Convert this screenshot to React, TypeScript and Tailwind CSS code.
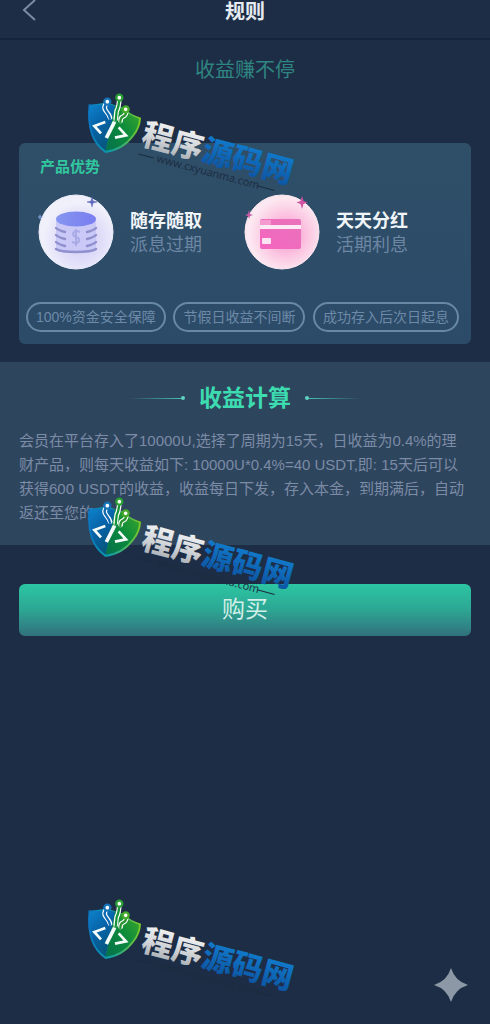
// App.tsx
//
// 规则页 — 产品优势卡片 + 收益计算说明 + 购买按钮,水印浮在内容之上。

import type { ReactNode } from "react";

type Feature = {
  title: string;
  subtitle: string;
  icon: ReactNode;
};

const FEATURES: Feature[] = [
  { title: "随存随取", subtitle: "派息过期", icon: <CoinsIcon /> },
  { title: "天天分红", subtitle: "活期利息", icon: <CardIcon /> },
];

const TAGS = ["100%资金安全保障", "节假日收益不间断", "成功存入后次日起息"];

function CoinsIcon() {
  return (
    <svg viewBox="0 0 76 76" className="size-[76px] shrink-0" aria-hidden="true">
      <defs>
        <radialGradient id="coins-bg" cx="0.56" cy="0.6">
          <stop offset="0" stopColor="#cfcbf8" />
          <stop offset="0.6" stopColor="#e0def9" />
          <stop offset="1" stopColor="#f0f0fb" />
        </radialGradient>
        <linearGradient id="coins-top" x1="0" x2="1">
          <stop offset="0" stopColor="#8595f0" />
          <stop offset="1" stopColor="#7a7df0" />
        </linearGradient>
      </defs>
      <circle cx="38" cy="38" r="37" fill="url(#coins-bg)" stroke="#eeeffa" />
      <path d="M18 26v29c0 5 40 5 40 0V26z" fill="#c9c8f6" />
      <g fill="none" stroke="#8f90cd" strokeWidth="2.4" strokeLinecap="round">
        <path d="M18 34c2 2 5 3 9 4M58 34c-2 2-5 3-9 4" />
        <path d="M18 41c2 2 5 3 9 4M58 41c-2 2-5 3-9 4" />
        <path d="M18 48c2 2 5 3 9 4M58 48c-2 2-5 3-9 4" />
        <path d="M18 55c6 4 34 4 40 0" />
      </g>
      <path
        d="M42 38c-6-3-10 3-4 5s3 8-4 5M38 35v17"
        fill="none"
        stroke="#a9aae6"
        strokeWidth="2"
      />
      <ellipse cx="38" cy="25" rx="20" ry="7.5" fill="url(#coins-top)" />
      <path d="M54 3l1 4 4 1-4 1-1 4-1-4-4-1 4-1z" fill="#5b69bb" stroke="#5b69bb" strokeWidth="0.5" />
      <path d="M2 20l1 2 2 1-2 1-1 2-1-2-2-1 2-1z" fill="#6d8fc4" />
    </svg>
  );
}

function CardIcon() {
  return (
    <svg viewBox="0 0 76 76" className="size-[76px] shrink-0" aria-hidden="true">
      <defs>
        <radialGradient id="card-bg" cx="0.56" cy="0.54">
          <stop offset="0" stopColor="#f88fce" />
          <stop offset="0.55" stopColor="#fbc3e0" />
          <stop offset="1" stopColor="#fce8f0" />
        </radialGradient>
        <linearGradient id="card-face" x1="0" x2="1" y1="1" y2="0">
          <stop offset="0" stopColor="#f465c0" />
          <stop offset="1" stopColor="#e973ba" />
        </linearGradient>
      </defs>
      <circle cx="38" cy="38" r="37" fill="url(#card-bg)" stroke="#fbe9f1" />
      <rect x="16" y="25" width="41" height="30" rx="2" fill="url(#card-face)" />
      <rect x="16" y="26" width="11" height="5" rx="1" fill="#f59acf" />
      <rect x="16" y="31" width="41" height="4" fill="#fdeaf5" />
      <rect x="18" y="44" width="9" height="6" rx="1" fill="#fde4f2" />
      <path d="M58 2l1.5 5 4 1.500-4 1.500-1.500 5-1.500-5-4-1.500 4-1.500z" fill="#d052a2" />
      <path d="M5 16l1 4 3 1-3 1-1 3-1-3-3-1 3-1z" fill="#c75ba4" />
    </svg>
  );
}

function Watermark({ id, className }: { id: string; className: string }) {
  return (
    <svg
      viewBox="0 0 240 110"
      className={`pointer-events-none absolute left-[70px] h-[110px] w-[240px] ${className}`}
    >
      <defs>
        <linearGradient id={`${id}-blue`} x1="0" x2="0.5" y1="0" y2="1">
          <stop offset="0" stopColor="#0d83cb" />
          <stop offset="0.5" stopColor="#0762a8" />
          <stop offset="1" stopColor="#06577c" />
        </linearGradient>
        <linearGradient id={`${id}-green`} x1="1" x2="0" y1="0" y2="1">
          <stop offset="0" stopColor="#3fa72a" />
          <stop offset="0.5" stopColor="#0b8a3c" />
          <stop offset="1" stopColor="#06704c" />
        </linearGradient>
        <linearGradient id={`${id}-rim`} x1="0" x2="1">
          <stop offset="0" stopColor="#0b75c4" />
          <stop offset="0.4" stopColor="#0d9aa8" />
          <stop offset="1" stopColor="#7ccb22" />
        </linearGradient>
        <linearGradient id={`${id}-silver`} x1="0" x2="0" y1="0" y2="1">
          <stop offset="0" stopColor="#ffffff" />
          <stop offset="0.55" stopColor="#d5d8db" />
          <stop offset="1" stopColor="#9da4ab" />
        </linearGradient>
        <linearGradient id={`${id}-word`} x1="0" x2="0" y1="0" y2="1">
          <stop offset="0" stopColor="#1385d8" />
          <stop offset="1" stopColor="#0b4f9c" />
        </linearGradient>
      </defs>

      <svg viewBox="0 0 720 330">
        <path
          d="M56 58Q84 59 108 52L160 68Q180 88 213 98Q212 128 192 153Q160 197 106 204Q76 184 63 148Q50 108 56 58z"
          fill={`url(#${id}-rim)`}
        />
        <path d="M60 62Q86 63 108 56L136 62L107 197Q80 178 68 146Q56 108 60 62z" fill={`url(#${id}-blue)`} />
        <path d="M136 60L158 72Q178 92 207 101Q206 126 188 149Q158 190 107 197z" fill={`url(#${id}-green)`} />
        <g fill="none" stroke="#ffffff" strokeWidth="14" strokeLinecap="round">
          <path d="M112 52Q98 66 108 78T120 98" />
          <path d="M148 40Q147 66 140 78L137 102" />
          <path d="M168 76Q170 90 160 94T152 108" />
        </g>
        <g fill="none" strokeWidth="7">
          <path d="M112 52Q98 66 108 78T121 104" stroke="#0d69b1" />
          <path d="M148 40Q147 66 140 78L137 108" stroke="#17933a" />
          <path d="M168 76Q170 90 160 94T151 114" stroke="#2a9433" />
        </g>
        <g fill="#ffffff" strokeWidth="7">
          <circle cx="112" cy="50" r="9" stroke="#1673b9" />
          <circle cx="148" cy="38" r="9" stroke="#2a9f35" />
          <circle cx="167" cy="73" r="9" stroke="#45aa29" />
        </g>
        <g fill="none" stroke="#f4fbf8" strokeWidth="8">
          <path d="M106 111L73 123L93 145" />
          <path d="M134 110L109 159" strokeWidth="11" />
          <path d="M146 127L168 151L135 158" />
        </g>
      </svg>

      <g transform="translate(70 59) rotate(15)">
        <text
          className="font-['Noto_Sans_CJK_SC',sans-serif] text-[31px] font-black"
          fill={`url(#${id}-silver)`}
        >
          程序
          <tspan fill={`url(#${id}-word)`}>源码网</tspan>
        </text>
        <path d="M1 10h16M124 10h18" stroke="#1b2c3f" strokeWidth="1" />
        <text x="20" y="13" className="font-['Open_Sans',sans-serif] text-[11px]" fill="#1b2c3f">
          www.cxyuanma.com
        </text>
      </g>
    </svg>
  );
}

function HeadingRule({ flip = false }: { flip?: boolean }) {
  return (
    <span className={`flex items-center ${flip ? "flex-row-reverse" : ""}`}>
      <span
        className={`h-px w-[52px] from-transparent to-[#45bfae] ${flip ? "bg-linear-to-l" : "bg-linear-to-r"}`}
      />
      <span className="size-1 rounded-full bg-[#5fd3c0]" />
    </span>
  );
}

export default function App() {
  return (
    <main className="relative min-h-screen overflow-hidden bg-[#1d2d45] font-['Liberation_Sans','Noto_Sans_CJK_SC',sans-serif]">
      <header className="grid h-10 grid-cols-3 items-start border-b-2 border-[#15243a]">
        <button type="button" aria-label="返回" className="ml-[22px] w-4 text-[#7d8ba3]">
          <svg viewBox="0 0 16 22" className="h-[22px] w-4" fill="none" stroke="currentColor" strokeWidth="2">
            <path d="M13 0L2 10l11 10" />
          </svg>
        </button>
        <h1 className="text-center text-[20px] leading-6 font-bold text-[#e6ebf2]">规则</h1>
      </header>

      <p className="mt-4 text-center text-[20px] leading-7 text-[#2f8582]">收益赚不停</p>

      <section className="mx-[19px] mt-[59px] rounded-md bg-linear-to-b from-[#2f4e67] to-[#2c4b69] pt-3 pr-3 pb-3 pl-[7px]">
        <h2 className="ml-3.5 text-[15px] leading-6 font-bold text-[#31c79f]">产品优势</h2>

        <ul className="mt-[15px] ml-3 grid grid-cols-[206px_1fr]">
          {FEATURES.map((f) => (
            <li key={f.title} className="flex items-center gap-4">
              {f.icon}
              <div className="pt-0.5 text-[18px] leading-6">
                <p className="font-bold text-[#f0f5f8]">{f.title}</p>
                <p className="text-[#6c86a4]">{f.subtitle}</p>
              </div>
            </li>
          ))}
        </ul>

        <ul className="mt-8 flex justify-between">
          {TAGS.map((tag) => (
            <li
              key={tag}
              className="rounded-full border-2 border-[#6788a6] px-2 text-[14px] leading-[26px] whitespace-nowrap text-[#6c8aa8]"
            >
              {tag}
            </li>
          ))}
        </ul>
      </section>

      <section className="mt-[18px] bg-[#2e455e] px-[19px] pt-5 pb-5">
        <div className="flex items-center justify-center gap-3.5">
          <HeadingRule />
          <h2 className="text-[23px] leading-8 font-bold text-[#3ddbb0]">收益计算</h2>
          <HeadingRule flip />
        </div>
        <p className="mt-[15px] text-[15px] leading-6 text-[#7c8ba6]">
          会员在平台存入了10000U,选择了周期为15天，日收益为0.4%的理财产品，则每天收益如下: 10000U*0.4%=40
          USDT,即: 15天后可以获得600 USDT的收益，收益每日下发，存入本金，到期满后，自动返还至您的
        </p>
      </section>

      <div className="px-[19px] pt-[39px]">
        <button
          type="button"
          className="h-[52px] w-full rounded-md bg-linear-to-b from-[#2cc6a3] via-[#2ca693] to-[#30717c] pb-0.5 text-[23px] text-[#d3efe9]"
        >
          购买
        </button>
      </div>

      <Watermark id="wm-top" className="top-[85px]" />
      <Watermark id="wm-middle" className="top-[489px]" />
      <Watermark id="wm-bottom" className="top-[891px]" />

      <svg viewBox="0 0 34 34" className="absolute top-[968px] right-[22px] size-[34px]" aria-hidden="true">
        <path d="M17 0Q21 13 34 17Q21 21 17 34Q13 21 0 17Q13 13 17 0z" fill="#8c98a6" />
      </svg>
    </main>
  );
}
